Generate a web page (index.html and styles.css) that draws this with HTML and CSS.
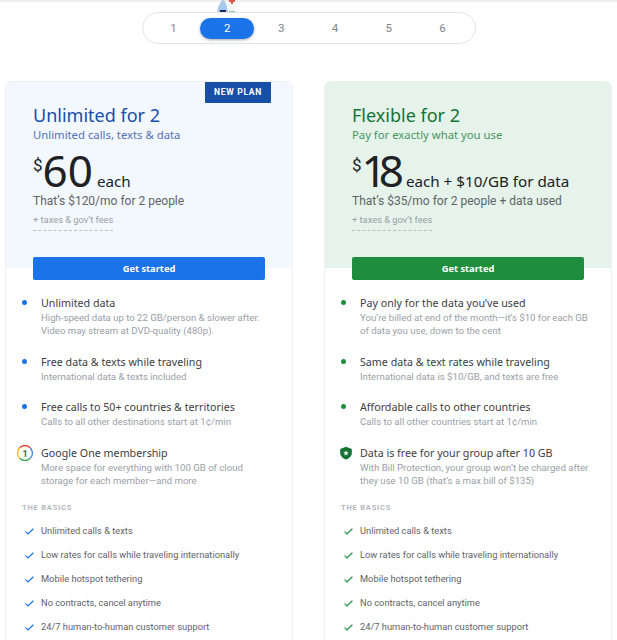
FILE: index.html
```html
<!DOCTYPE html>
<html lang="en">

<head>
    <meta charset="UTF-8">
    <title>Plans for 2</title>
    <link rel="stylesheet" href="styles.css">
</head>

<body>
    <div class="top-shadow"></div>
    <div class="pager-wrap">
        <svg class="people" width="24" height="13" viewBox="0 0 24 13">
            <path d="M2 12 C3 6 6 0 8 0 C10 0 12 6 13 12 Z" fill="#a9c9ee" />
            <rect x="5" y="10" width="6" height="2" fill="#1b2a5c" />
            <path d="M14 4 h6 v8 h-6 Z" fill="#f4f8f2" />
            <path d="M14 11 h6 v1 h-6 Z" fill="#8fc79b" />
            <path d="M14 0 h6 v2 h-2 v2 h-2 v-2 h-2 Z" fill="#e0574c" />
        </svg>
        <div class="pager">
            <span class="page">1</span>
            <span class="page active">2</span>
            <span class="page">3</span>
            <span class="page">4</span>
            <span class="page">5</span>
            <span class="page">6</span>
        </div>
    </div>

    <div class="plans">
        <div class="plan plan-blue">
            <div class="new-plan">NEW PLAN</div>
            <div class="plan-head">
                <h2 class="plan-title">Unlimited for 2</h2>
                <div class="plan-sub">Unlimited calls, texts &amp; data</div>
                <div class="price"><sup class="dollar">$</sup><span class="amount">60</span><span class="each">each</span></div>
                <div class="total">That’s $120/mo for 2 people</div>
                <div class="fees">+ taxes &amp; gov’t fees</div>
                <a href="javascript:;" class="start">Get started</a>
            </div>
            <div class="plan-body">
                <div class="feature">
                    <span class="dot"></span>
                    <div>
                        <div class="feature-title">Unlimited data</div>
                        <div class="feature-desc">High-speed data up to 22 GB/person &amp; slower after.<br>Video may stream at DVD-quality (480p).</div>
                    </div>
                </div>
                <div class="feature">
                    <span class="dot"></span>
                    <div>
                        <div class="feature-title">Free data &amp; texts while traveling</div>
                        <div class="feature-desc">International data &amp; texts included</div>
                    </div>
                </div>
                <div class="feature">
                    <span class="dot"></span>
                    <div>
                        <div class="feature-title">Free calls to 50+ countries &amp; territories</div>
                        <div class="feature-desc">Calls to all other destinations start at 1¢/min</div>
                    </div>
                </div>
                <div class="feature">
                    <svg class="feature-icon" width="16" height="16" viewBox="0 0 16 16" fill="none" stroke-width="1.3">
                        <path d="M2.7 2.7 A7.4 7.4 0 0 1 13.2 2.7" stroke="#ea4335" />
                        <path d="M13.2 2.7 A7.4 7.4 0 0 1 13.2 13.3" stroke="#4285f4" />
                        <path d="M13.2 13.3 A7.4 7.4 0 0 1 2.7 13.3" stroke="#34a853" />
                        <path d="M2.7 13.3 A7.4 7.4 0 0 1 2.7 2.7" stroke="#fbbc04" />
                        <text x="8" y="12" text-anchor="middle" class="one">1</text>
                    </svg>
                    <div>
                        <div class="feature-title">Google One membership</div>
                        <div class="feature-desc">More space for everything with 100 GB of cloud<br>storage for each member—and more</div>
                    </div>
                </div>
                <div class="basics-label">THE BASICS</div>
                <ul class="basics">
                    <li><svg class="check" width="9" height="7" viewBox="0 0 9 7"><path d="M0.6 3.6 L3 6 L8.4 0.8" /></svg>Unlimited calls &amp; texts</li>
                    <li><svg class="check" width="9" height="7" viewBox="0 0 9 7"><path d="M0.6 3.6 L3 6 L8.4 0.8" /></svg>Low rates for calls while traveling internationally</li>
                    <li><svg class="check" width="9" height="7" viewBox="0 0 9 7"><path d="M0.6 3.6 L3 6 L8.4 0.8" /></svg>Mobile hotspot tethering</li>
                    <li><svg class="check" width="9" height="7" viewBox="0 0 9 7"><path d="M0.6 3.6 L3 6 L8.4 0.8" /></svg>No contracts, cancel anytime</li>
                    <li><svg class="check" width="9" height="7" viewBox="0 0 9 7"><path d="M0.6 3.6 L3 6 L8.4 0.8" /></svg>24/7 human-to-human customer support</li>
                </ul>
            </div>
        </div>

        <div class="plan plan-green">
            <div class="plan-head">
                <h2 class="plan-title">Flexible for 2</h2>
                <div class="plan-sub">Pay for exactly what you use</div>
                <div class="price"><sup class="dollar">$</sup><span class="amount">18</span><span class="each">each + $10/GB for data</span></div>
                <div class="total">That’s $35/mo for 2 people + data used</div>
                <div class="fees">+ taxes &amp; gov’t fees</div>
                <a href="javascript:;" class="start">Get started</a>
            </div>
            <div class="plan-body">
                <div class="feature">
                    <span class="dot"></span>
                    <div>
                        <div class="feature-title">Pay only for the data you’ve used</div>
                        <div class="feature-desc">You’re billed at end of the month—it’s $10 for each GB<br>of data you use, down to the cent</div>
                    </div>
                </div>
                <div class="feature">
                    <span class="dot"></span>
                    <div>
                        <div class="feature-title">Same data &amp; text rates while traveling</div>
                        <div class="feature-desc">International data is $10/GB, and texts are free</div>
                    </div>
                </div>
                <div class="feature">
                    <span class="dot"></span>
                    <div>
                        <div class="feature-title">Affordable calls to other countries</div>
                        <div class="feature-desc">Calls to all other countries start at 1¢/min</div>
                    </div>
                </div>
                <div class="feature">
                    <svg class="feature-icon shield" width="16" height="16" viewBox="0 0 16 16">
                        <path d="M8 1.8 L13.8 3.9 V8 C13.8 11 11.3 13.5 8 14.4 C4.7 13.5 2.2 11 2.2 8 V3.9 Z" fill="#137333" />
                        <path d="M8 5.2 L8.8 7 L10.7 7.2 L9.3 8.5 L9.7 10.4 L8 9.4 L6.3 10.4 L6.7 8.5 L5.3 7.2 L7.2 7 Z" fill="#e6f4ea" />
                    </svg>
                    <div>
                        <div class="feature-title">Data is free for your group after 10 GB</div>
                        <div class="feature-desc">With Bill Protection, your group won’t be charged after<br>they use 10 GB (that’s a max bill of $135)</div>
                    </div>
                </div>
                <div class="basics-label">THE BASICS</div>
                <ul class="basics">
                    <li><svg class="check" width="9" height="7" viewBox="0 0 9 7"><path d="M0.6 3.6 L3 6 L8.4 0.8" /></svg>Unlimited calls &amp; texts</li>
                    <li><svg class="check" width="9" height="7" viewBox="0 0 9 7"><path d="M0.6 3.6 L3 6 L8.4 0.8" /></svg>Low rates for calls while traveling internationally</li>
                    <li><svg class="check" width="9" height="7" viewBox="0 0 9 7"><path d="M0.6 3.6 L3 6 L8.4 0.8" /></svg>Mobile hotspot tethering</li>
                    <li><svg class="check" width="9" height="7" viewBox="0 0 9 7"><path d="M0.6 3.6 L3 6 L8.4 0.8" /></svg>No contracts, cancel anytime</li>
                    <li><svg class="check" width="9" height="7" viewBox="0 0 9 7"><path d="M0.6 3.6 L3 6 L8.4 0.8" /></svg>24/7 human-to-human customer support</li>
                </ul>
            </div>
        </div>
    </div>
</body>

</html>
```

FILE: styles.css
```css
* {
    box-sizing: border-box;
}

html,
body {
    height: 100%;
    margin: 0;
    overflow: hidden;
}

body {
    position: relative;
    background-color: #fff;
    font-family: Roboto, "Liberation Sans", sans-serif;
    color: #3c4043;
}

a {
    text-decoration: none;
}

.top-shadow {
    position: absolute;
    top: 0;
    left: 0;
    width: 100%;
    height: 3px;
    background: linear-gradient(#e8e8e8, #fff);
}

/* pager */
.pager-wrap {
    position: relative;
    display: flex;
    justify-content: center;
    padding: 12px 0 37px 0;
}

.people {
    position: absolute;
    top: 0;
    left: 215px;
}

.pager {
    display: flex;
    align-items: center;
    width: 334px;
    height: 32px;
    padding: 0 5px 0 4px;
    border: 1px solid #e3e4e6;
    border-radius: 16px;
    background-color: #fff;
}

.page {
    flex: 1;
    height: 21px;
    border-radius: 11px;
    font-size: 11.5px;
    line-height: 21px;
    text-align: center;
    color: #80868b;
}

.page.active {
    flex: 0 0 54px;
    background-color: #1a73e8;
    color: #fff;
    box-shadow: 0 1px 3px rgba(60, 64, 67, .45);
}

/* plans */
.plans {
    display: grid;
    grid-template-columns: 288px 288px;
    column-gap: 31px;
    padding: 0 0 0 5px;
}

.plan {
    position: relative;
    height: 640px;
    border: 1px solid #eff0f1;
    border-radius: 6px;
    overflow: hidden;
}

.new-plan {
    position: absolute;
    top: 0;
    left: 199px;
    width: 66px;
    height: 21px;
    background-color: #174ea6;
    font-size: 8.5px;
    font-weight: 700;
    letter-spacing: .7px;
    line-height: 21px;
    text-align: center;
    color: #fff;
    border-radius: 0 0 1px 1px;
}

.plan-head {
    height: 186px;
    padding: 21px 0 0 27px;
}

.plan-blue .plan-head {
    background-color: #f3f8fe;
}

.plan-green .plan-head {
    background-color: #e6f3ea;
}

.plan-title {
    margin: 0;
    font-family: "Noto Sans", sans-serif;
    font-size: 18px;
    font-weight: 400;
    line-height: 24px;
}

.plan-sub {
    margin-top: -1px;
    font-family: "Noto Sans", sans-serif;
    font-size: 11.3px;
    line-height: 17px;
}

.plan-blue .plan-title {
    color: #174ea6;
}

.plan-blue .plan-sub {
    color: #5470b4;
}

.plan-green .plan-title {
    color: #137333;
}

.plan-green .plan-sub {
    color: #4a9465;
}

.price {
    display: flex;
    align-items: baseline;
    height: 43px;
    margin-top: 7px;
    color: #202124;
}

.dollar {
    align-self: flex-start;
    margin-top: 5px;
    font-size: 17px;
    line-height: 20px;
    vertical-align: baseline;
}

.amount {
    font-family: "Noto Sans", sans-serif;
    font-size: 44px;
    line-height: 40px;
}

.plan-green .amount {
    letter-spacing: -8px;
}

.each {
    margin-left: 4px;
    font-family: "Noto Sans", sans-serif;
    font-size: 15.2px;
}

.plan-green .each {
    margin-left: 10px;
}

.total {
    margin-top: -1px;
    font-size: 12px;
    line-height: 18px;
    color: #5f6368;
}

.fees {
    width: fit-content;
    height: 18px;
    margin-top: 3px;
    border-bottom: 1px dashed #bdc1c6;
    font-size: 9.3px;
    line-height: 14px;
    color: #9aa0a6;
}

.start {
    display: block;
    width: 232px;
    height: 23px;
    margin-top: 26px;
    border-radius: 2px;
    font-family: "Noto Sans", sans-serif;
    font-size: 9.3px;
    font-weight: 700;
    line-height: 23px;
    text-align: center;
    color: #fff;
    position: relative;
}

.plan-blue .start {
    background-color: #1a73e8;
}

.plan-green .start {
    background-color: #1e8e3e;
}

/* features */
.plan-body {
    padding: 28px 0 0 0;
}

.feature {
    position: relative;
    margin-bottom: 17px;
    padding-left: 35px;
}

.dot {
    position: absolute;
    left: 16px;
    top: 4px;
    width: 5px;
    height: 5px;
    border-radius: 50%;
}

.plan-blue .dot {
    background-color: #1a73e8;
}

.plan-green .dot {
    background-color: #1e8e3e;
}

.feature-icon {
    position: absolute;
    left: 11px;
    top: -1px;
}

.feature-icon.shield {
    left: 13px;
}

.feature-title {
    font-family: "Noto Sans", sans-serif;
    font-size: 10.7px;
    line-height: 15px;
    color: #3c4043;
}

.feature-desc {
    font-size: 9.6px;
    line-height: 13.4px;
    color: #9aa0a6;
}

.one {
    font-family: Roboto, sans-serif;
    font-size: 9px;
    font-weight: 700;
    fill: #34703f;
}

.basics-label {
    margin: -1px 0 0 16px;
    font-size: 7.5px;
    font-weight: 700;
    letter-spacing: .8px;
    line-height: 10px;
    color: #b4b8bd;
}

.basics {
    margin: 5px 0 0 0;
    padding: 0 0 0 19px;
    list-style: none;
}

.basics li {
    display: flex;
    align-items: center;
    height: 24px;
    font-size: 9.3px;
    color: #5f6368;
}

.check {
    flex: none;
    margin: 3px 7px 0 0;
    fill: none;
    stroke-width: 1.2;
}

.plan-blue .check {
    stroke: #1a73e8;
}

.plan-green .check {
    stroke: #1e8e3e;
}
```
